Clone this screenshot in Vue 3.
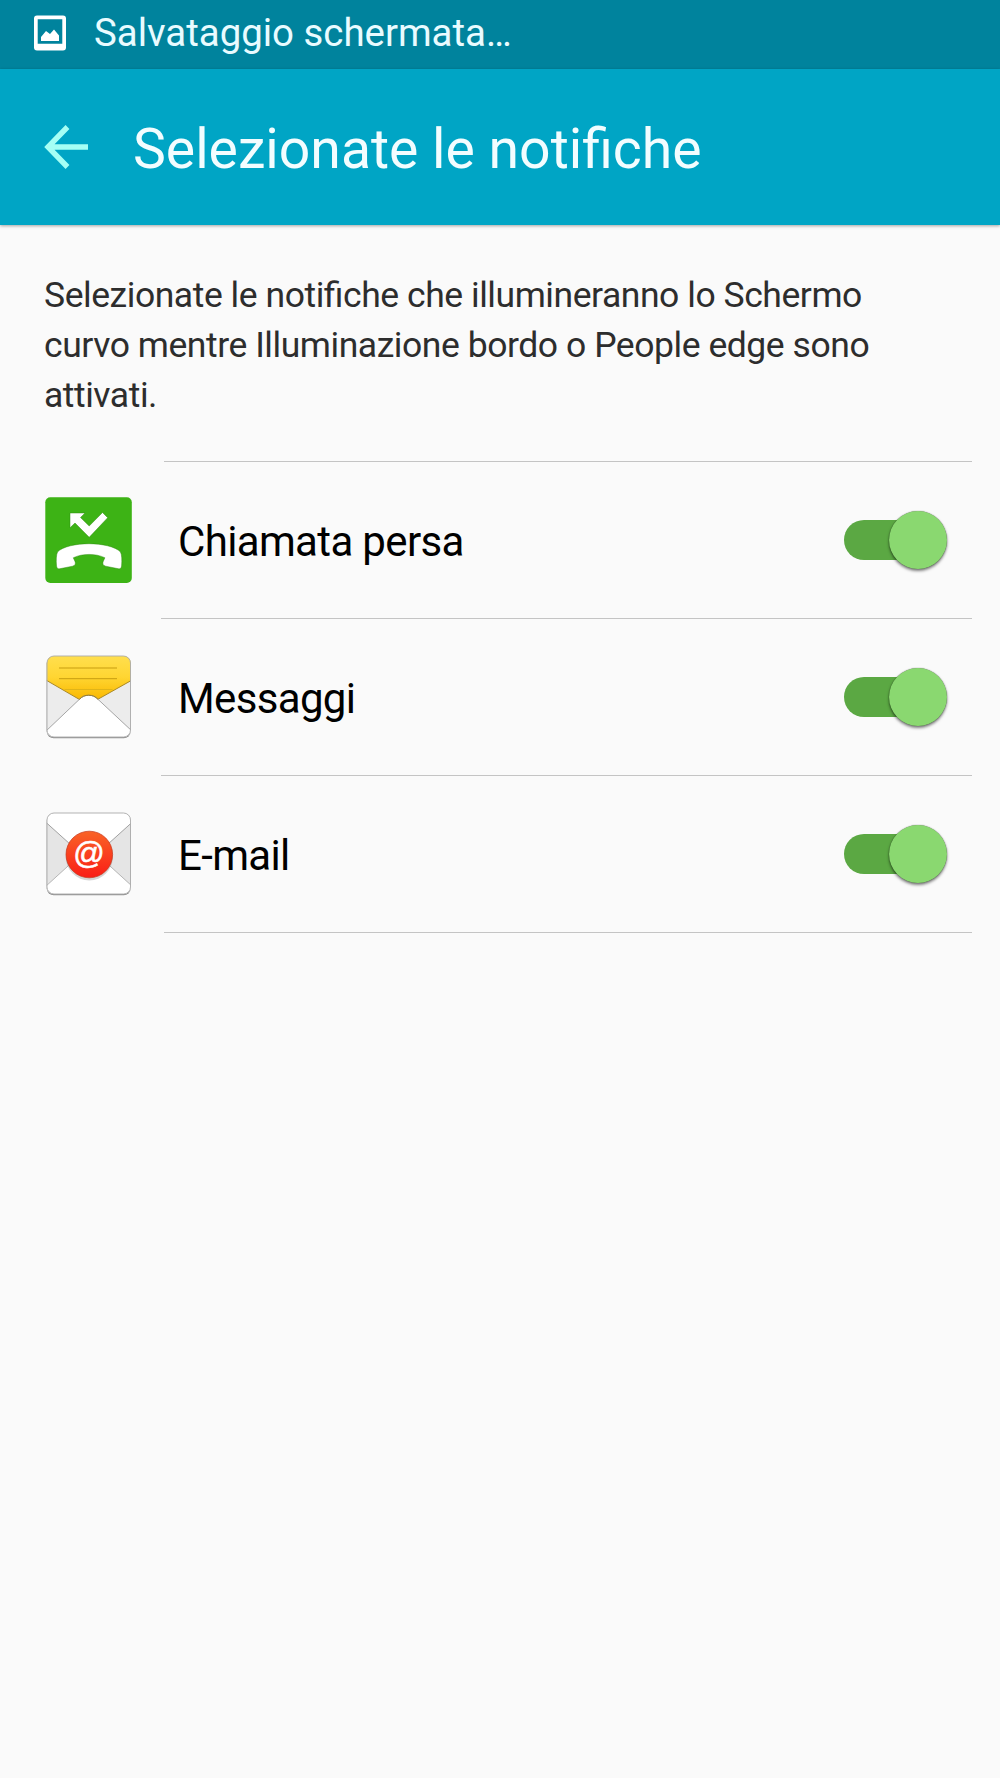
<template>
  <div class="screen">
    <div class="status-bar">
      <svg class="status-icon" viewBox="0 0 32 36">
        <path
          fill="#fff"
          fill-rule="evenodd"
          d="M3 .5h26a3 3 0 0 1 3 3v29a3 3 0 0 1-3 3H3a3 3 0 0 1-3-3v-29a3 3 0 0 1 3-3zM3.700 4.200v24.600h24.600V4.200z"
        />
        <path fill="#fff" d="M7 26v-4l5-6 4 3 4-4.500 5 6v5.500z" />
      </svg>
      <span class="status-text">Salvataggio schermata…</span>
    </div>

    <header class="app-bar">
      <svg class="back" viewBox="0 0 44 44" @click="goBack">
        <path d="M44 22H5M23.500 2L4 22l19.500 20" fill="none" stroke="#a5fff5" stroke-width="5.400" />
      </svg>
      <h1 class="title">Selezionate le notifiche</h1>
    </header>

    <p class="description">
      <span class="line">Selezionate le notifiche che illumineranno lo Schermo</span>
      <span class="line">curvo mentre Illuminazione bordo o People edge sono</span>
      <span class="line">attivati.</span>
    </p>

    <ul class="list">
      <li v-for="item in items" :key="item.id" class="row" @click="toggle(item)">
        <!-- missed call -->
        <svg v-if="item.id === 'call'" class="icon" viewBox="0 0 88 88">
          <rect x="0.300" y="1.300" width="86.500" height="85.600" rx="5" fill="#3db315" />
          <g fill="#fff" stroke="#2b8a0c" stroke-opacity=".6" stroke-width=".8">
            <path d="M25 17h15l-4.500 4.500L44.200 30 57.500 16.500l5.200 5.200L44.200 41.300 30 27l-5 4.800z" />
            <path
              d="M11.500 70c-.5-6-.3-11 1-14 5-5.500 19-8.300 31.500-8.300S70.500 50.500 75.500 56c1.400 3 1.600 8 1.100 14-.2 2-1.300 3-3 2.800l-13-2.600c-2.500-.7-3.500-2.600-2.300-5l1.600-3.400c-9-4.500-22.600-4.500-31.600 0l1.600 3.400c1.200 2.400.2 4.300-2.300 5l-13 2.600c-1.900.2-2.900-.8-3.100-2.800z"
            />
          </g>
        </svg>
        <!-- messages -->
        <svg v-else-if="item.id === 'sms'" class="icon" viewBox="0 0 88 88">
          <defs>
            <linearGradient id="paper" x1="0" y1="0" x2="0" y2="1">
              <stop offset="0" stop-color="#ffe052" />
              <stop offset=".5" stop-color="#ffd633" />
              <stop offset="1" stop-color="#fab800" />
            </linearGradient>
            <clipPath id="sms-clip">
              <rect x="1.800" y="3" width="84" height="81" rx="7" />
            </clipPath>
          </defs>
          <rect x="1.700" y="3.700" width="84" height="81.600" rx="7" fill="#929292" />
          <g clip-path="url(#sms-clip)">
            <rect width="88" height="88" fill="#ececec" />
            <path d="M0 0h88v26.500L52 46.800H35L0 26.500z" fill="url(#paper)" stroke="#a98928" stroke-width="1" />
            <path d="M14 15h58M14 25.700h58" stroke="#c79d10" stroke-width="1" />
            <path d="M19.500 36.500h48" stroke="#e0b418" stroke-width="1" />
            <path
              d="M0 79L34 46.700c3-3.300 6-4.400 9.700-4.400s6.700 1.100 9.700 4.400L88 79v10H0z"
              fill="#fff"
              stroke="#a5a5a5"
              stroke-width="1"
            />
            <path d="M34.200 46.500c3-3.200 5.900-4.300 9.500-4.300s6.500 1.100 9.500 4.300" fill="none" stroke="#987c28" />
          </g>
          <rect x="2" y="3" width="83.500" height="81" rx="7" fill="none" stroke="#aaa" stroke-width=".9" />
        </svg>
        <!-- e-mail -->
        <svg v-else class="icon" viewBox="0 0 88 88">
          <defs>
            <linearGradient id="seal" x1="0" y1="0" x2="0" y2="1">
              <stop offset="0" stop-color="#f96327" />
              <stop offset="1" stop-color="#fa1d16" />
            </linearGradient>
            <clipPath id="mail-clip">
              <rect x="1.800" y="3" width="84" height="81" rx="7" />
            </clipPath>
          </defs>
          <rect x="1.700" y="3.700" width="84" height="81.600" rx="7" fill="#929292" />
          <g clip-path="url(#mail-clip)">
            <rect width="88" height="88" fill="#e5e5e5" />
            <path d="M0 77l34-31h20l34 31v12H0z" fill="#fff" stroke="#b5b5b5" />
            <path d="M0 0h88v11.500L52 44H36L0 11.500z" fill="#fff" stroke="#a0a0a0" />
          </g>
          <rect x="2" y="3" width="83.500" height="81" rx="7" fill="none" stroke="#aaa" stroke-width=".9" />
          <circle cx="44.300" cy="47" r="23.500" fill="#888" fill-opacity=".35" />
          <circle cx="44.300" cy="44.500" r="23.300" fill="url(#seal)" stroke="#c5361b" stroke-width=".7" />
          <text x="43.900" y="53.500" class="at">@</text>
        </svg>
        <span class="label">{{ item.title }}</span>
        <span class="switch" :class="{ on: item.enabled }">
          <span class="thumb"></span>
        </span>
      </li>
    </ul>
  </div>
</template>

<script setup>
import { ref } from 'vue'

const items = ref([
  { id: 'call', title: 'Chiamata persa', enabled: true },
  { id: 'sms', title: 'Messaggi', enabled: true },
  { id: 'mail', title: 'E-mail', enabled: true }
])

function toggle (item) {
  item.enabled = !item.enabled
}

function goBack () {
  window.history.back()
}
</script>

<style>
body {
  margin: 0;
  background: #fafafa;
}
</style>

<style scoped>
.screen {
  min-height: 1778px;
  background: #fafafa;
  font-family: Roboto, "Noto Sans", sans-serif;
}

.status-bar {
  display: flex;
  align-items: center;
  box-sizing: border-box;
  height: 69px;
  padding: 0 34px 3px;
  background: #00839d;
}

.status-icon {
  width: 32px;
  height: 36px;
  margin-right: 28px;
}

.status-text {
  font-size: 38.4px;
  line-height: 44px;
  color: #e9fbff;
  white-space: nowrap;
}

.app-bar {
  display: flex;
  align-items: center;
  height: 156px;
  padding: 0 44px;
  background: #00a5c5;
  box-shadow: 0 1px 3px rgba(0, 0, 0, 0.35);
}

.back {
  width: 44px;
  height: 44px;
  margin-right: 45px;
}

.title {
  margin: 6px 0 0;
  font-size: 55.3px;
  font-weight: 400;
  line-height: 64px;
  color: #f2fdff;
  white-space: nowrap;
}

.description {
  margin: 0;
  padding: 45px 44px 41px;
  font-size: 35.5px;
  line-height: 50px;
  letter-spacing: -0.45px;
  font-feature-settings: "liga" 1; /* keep the fi ligature despite the tracking */
  color: #2d2d2d;
}

.line {
  display: block;
  white-space: nowrap;
}

.list {
  margin: 0;
  padding: 0;
  list-style: none;
}

.row {
  position: relative;
  display: flex;
  align-items: center;
  height: 157px;
  padding: 0 53px 0 45px;
}

/* dividers start after the icon column */
.row::before,
.row:last-child::after {
  content: "";
  position: absolute;
  top: 0;
  left: 161px;
  right: 28px;
  height: 1px;
  background: #c4c4c4;
}

.row:first-child::before {
  left: 164px;
}

.row:last-child::after {
  top: 157px;
  left: 164px;
}

.icon {
  width: 88px;
  height: 88px;
  margin-right: 45px;
}

.at {
  font-family: "Liberation Sans", sans-serif;
  font-size: 31px;
  text-anchor: middle;
  fill: #fff;
  stroke: #fff;
  stroke-width: 0.6px;
}

.label {
  flex: 1;
  padding-top: 4px;
  font-size: 42px;
  line-height: 48px;
  letter-spacing: -0.65px;
  color: #000;
}

.switch {
  position: relative;
  width: 103px;
  height: 58px;
  margin-top: 1px;
}

.switch::before {
  content: "";
  position: absolute;
  top: 9px;
  left: 0;
  width: 95px;
  height: 40px;
  border-radius: 20px;
  background: #b0b0b0;
}

.thumb {
  position: absolute;
  top: 0;
  left: 0;
  width: 58px;
  height: 58px;
  border-radius: 50%;
  background: #ececec;
  box-shadow: 0 2px 3px rgba(0, 0, 0, 0.5), 0 0 1px rgba(0, 0, 0, 0.6);
}

.switch.on::before {
  background: #5ba843;
}

.switch.on .thumb {
  left: 45px;
  background: #8ad870;
}
</style>
